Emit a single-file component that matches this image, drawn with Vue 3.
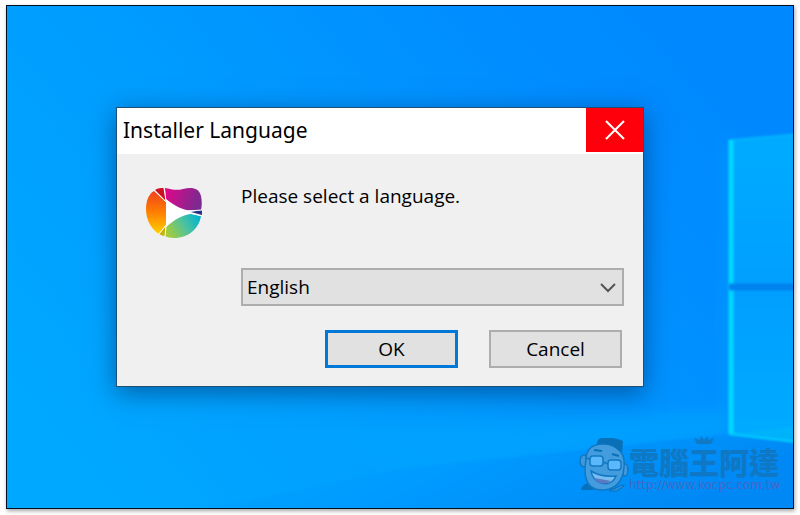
<script setup>
import { ref } from 'vue'

const visible = ref(true)
const language = ref('English')
const languages = ['English', 'Français', 'Deutsch', 'Español', '日本語']

function closeDialog() {
  visible.value = false
}
</script>

<template>
  <main class="page">
    <div class="desktop">
      <svg class="wallpaper" viewBox="0 0 786 502" preserveAspectRatio="xMaxYMid slice" aria-hidden="true">
        <defs>
          <linearGradient id="sky" x1="0" y1="0.75" x2="1" y2="0.2">
            <stop offset="0" stop-color="#00a8ff" />
            <stop offset="0.4" stop-color="#009cff" />
            <stop offset="0.8" stop-color="#008cff" />
            <stop offset="1" stop-color="#0088fe" />
          </linearGradient>
          <linearGradient id="floor" x1="0" y1="0" x2="1" y2="0.3">
            <stop offset="0" stop-color="#00a8ff" />
            <stop offset="0.5" stop-color="#009aff" />
            <stop offset="1" stop-color="#0088f5" />
          </linearGradient>
          <linearGradient id="pane" x1="0" y1="0" x2="0" y2="1">
            <stop offset="0" stop-color="#00acff" />
            <stop offset="0.5" stop-color="#009fff" />
            <stop offset="1" stop-color="#00abff" />
          </linearGradient>
          <filter id="soft" x="-10%" y="-10%" width="120%" height="120%">
            <feGaussianBlur stdDeviation="1" />
          </filter>
          <filter id="haze" x="-20%" y="-20%" width="140%" height="140%">
            <feGaussianBlur stdDeviation="8" />
          </filter>
        </defs>
        <rect width="786" height="502" fill="url(#sky)" />
        <path d="M300 430 L724 405 L724 430 L400 470 Z" fill="#00a4ff" opacity="0.7" filter="url(#haze)" />
        <path d="M200 502 L393 463 L724 428 L796 433 V512 H200 Z" fill="url(#floor)" filter="url(#soft)" />
        <path d="M712 135 H730 V425 H712 Z" fill="#009cff" opacity="0.4" filter="url(#haze)" />
        <g filter="url(#soft)">
          <path d="M722 134 L790 128 V436 L722 428 Z" fill="url(#pane)" />
          <path d="M722 134 L790 128" stroke="#00c0ff" stroke-width="1" />
          <path d="M724 134 V428" stroke="#00d8ff" stroke-width="5" />
          <path d="M735 427 L790 420 V436 Z" fill="#00b2fa" />
          <path d="M722 428 L790 436" stroke="#00d2ff" stroke-width="2" />
          <path d="M722 281 H790" stroke="#0082ef" stroke-width="7" />
        </g>
      </svg>

      <section v-if="visible" class="dialog" role="dialog" aria-labelledby="dialog-title">
        <header class="title-bar">
          <h1 id="dialog-title">Installer Language</h1>
          <button class="close" type="button" aria-label="Close" @click="closeDialog">
            <svg width="20" height="20" viewBox="0 0 20 20">
              <path d="M1 1 L19 19 M19 1 L1 19" stroke="#fff" stroke-width="2" fill="none" />
            </svg>
          </button>
        </header>

        <form class="dialog-body" @submit.prevent="closeDialog">
          <svg class="logo" width="58" height="54" viewBox="0 0 58 54" aria-hidden="true">
            <defs>
              <linearGradient id="warm" x1="0" y1="0" x2="0" y2="1">
                <stop offset="0" stop-color="#f0401e" />
                <stop offset="0.5" stop-color="#ff8000" />
                <stop offset="1" stop-color="#ffd000" />
              </linearGradient>
              <linearGradient id="purple" x1="0" y1="0" x2="1" y2="0.2">
                <stop offset="0" stop-color="#e3068a" />
                <stop offset="1" stop-color="#7b2a90" />
              </linearGradient>
              <linearGradient id="green" x1="0" y1="0.6" x2="1" y2="0.2">
                <stop offset="0" stop-color="#a4cc3c" />
                <stop offset="0.5" stop-color="#4fc29c" />
                <stop offset="1" stop-color="#00b4d2" />
              </linearGradient>
            </defs>
            <path d="M21 12 L21 41 L46 26 Z" fill="#fff" />
            <path d="M9 4 C4 7 1 13 1 22 C1 33 6 42 14 47 L21 38 V15 Z" fill="url(#warm)" />
            <path d="M10 3 C13 1 16 1 19 1 L21 14 Z" fill="#cf1020" />
            <path d="M20 1 C26 2 31 4 38 2 C47 0 54 1 56 9 C57 14 57 19 56 23 C49 24 44 24 38 22 C32 20 26 16 21 12 Z" fill="url(#purple)" />
            <path d="M46 25 L57 23 L57 28 Z" fill="#283184" />
            <path d="M56 29 C54 41 44 51 29 51 C25 51 22 50 20 49 L21 40 C29 33 37 28 46 27 Z" fill="url(#green)" />
            <path d="M14 47 L21 39 L20 49 C18 49 16 48 14 47 Z" fill="#c9b200" />
            <path d="M9 3 L21 15 M19 1 L21 14 M14 47 L21 38 M20 49 L21 39 M42 24 L57 23 M45 26 L57 29" stroke="#fff" stroke-width="1" fill="none" />
          </svg>

          <div class="fields">
            <label for="language">Please select a language.</label>
            <div class="select-box">
              <select id="language" v-model="language">
                <option v-for="item in languages" :key="item" :value="item">{{ item }}</option>
              </select>
              <svg class="chevron" width="18" height="12" viewBox="0 0 18 12" aria-hidden="true">
                <path d="M2 2 L9 9 L16 2" stroke="#555" stroke-width="2" fill="none" />
              </svg>
            </div>
            <div class="actions">
              <button class="action primary" type="submit">OK</button>
              <button class="action" type="button" @click="closeDialog">Cancel</button>
            </div>
          </div>
        </form>
      </section>

      <div class="watermark">
        <svg class="mascot" width="50" height="54" viewBox="0 0 50 54" aria-hidden="true">
          <!-- shoulders and hand -->
          <path d="M2 52 C3 48 5 46 9 45 L16 52 Z" fill="#0871bd" />
          <path d="M31 52 C37 51 40 47 45 47 L45 48 L38 53 H30 Z" fill="#2b8dd4" stroke="#0871bd" />
          <!-- ears and head -->
          <ellipse cx="5" cy="23" rx="4" ry="6" fill="#3d98dc" stroke="#1277c2" stroke-width="1.5" />
          <ellipse cx="46" cy="32" rx="3" ry="6" fill="#3d98dc" stroke="#1277c2" stroke-width="1.5" />
          <path d="M17 7 C10 9 7 14 7 21 C6 29 5 34 7 40 C9 48 15 52 23 52 C34 52 41 46 44 36 C46 27 46 18 41 13 C34 6 25 4 17 7 Z" fill="#429cdd" stroke="#1277c2" stroke-width="1.5" />
          <path d="M18 7 C18 3 19 1 22 0 C30 -1 38 0 44 3 L43 15 C37 8 28 5 18 7 Z" fill="#0a70b8" />
          <path d="M15 12 L23 13 M33 16 L40 18" stroke="#0a70b8" stroke-width="2" />
          <!-- glasses -->
          <rect x="11" y="18" width="13" height="10" rx="3" fill="#5cb8fa" stroke="#1277c2" stroke-width="1.5" />
          <rect x="29" y="22" width="13" height="10" rx="3" fill="#5cb8fa" stroke="#1277c2" stroke-width="1.5" />
          <path d="M24 24 L29 26 M6 20 L11 21" stroke="#1277c2" stroke-width="1.5" />
          <!-- smile -->
          <path d="M12 33 C20 38 28 39 37 38 C34 45 28 47 22 45 C16 43 13 39 12 33 Z" fill="#78bdf0" stroke="#1277c2" stroke-width="1.5" />
          <path d="M15 40 C21 41 27 42 32 43 C25 48 18 45 15 40 Z" fill="#5a78c4" />
        </svg>
        <div class="brand">
          <svg class="crown" width="20" height="10" viewBox="0 0 20 10" aria-hidden="true">
            <path d="M3 9 L0 3 L6 5 L7 1 L10 5 L14 1 L14 5 L20 3 L17 9 Z" fill="#1179c4" />
          </svg>
          <span class="brand-name">電腦王阿達</span>
          <a class="brand-url" href="http://www.kocpc.com.tw">http://www.kocpc.com.tw</a>
        </div>
      </div>
    </div>
  </main>
</template>

<style>
body {
  margin: 0;
  background: #fff;
}
</style>

<style scoped>
.page {
  box-sizing: border-box;
  min-height: 100vh;
  padding: 5px 6px 6px;
  display: grid;
  font-family: "Open Sans", "Noto Sans CJK TC", sans-serif;
  color: #000;
}

.desktop {
  position: relative;
  overflow: hidden;
  display: flex;
  align-items: flex-end;
  justify-content: flex-end;
  border: 1px solid #001020;
  background: #009cff;
  box-shadow: 1px 2px 4px rgba(0, 0, 0, 0.35);
}

.wallpaper {
  position: absolute;
  inset: 0;
  width: 100%;
  height: 100%;
}

.dialog {
  position: absolute;
  top: 101px;
  left: 109px;
  width: 526px;
  border: 1px solid #1c5075;
  background: #f0f0f0;
  box-shadow: 0 6px 24px rgba(0, 30, 80, 0.5);
}

.title-bar {
  display: flex;
  align-items: flex-start;
  justify-content: space-between;
  height: 46px;
  background: #fff;
}

h1 {
  margin: 0;
  padding-left: 6px;
  font-family: "Noto Sans", sans-serif;
  font-size: 21px;
  font-weight: 400;
  line-height: 44px;
}

.close {
  display: flex;
  align-items: center;
  justify-content: center;
  width: 57px;
  height: 44px;
  padding: 0;
  border: 0;
  background: #fe000c;
}

.dialog-body {
  display: flex;
  align-items: flex-start;
  gap: 38px;
  padding: 28px 19px 18px 28px;
  font-size: 19px;
  line-height: 28px;
}

.logo {
  flex: none;
  margin-top: 5px;
}

.fields {
  flex: 1;
  display: flex;
  flex-direction: column;
}

.select-box {
  position: relative;
  display: flex;
  margin-top: 58px;
}

select {
  appearance: none;
  width: 100%;
  height: 38px;
  padding: 0 4px;
  border: 2px solid #adadad;
  border-radius: 0;
  background: #e1e1e1;
  color: #000;
  font: inherit;
}

.chevron {
  position: absolute;
  top: 14px;
  right: 7px;
  pointer-events: none;
}

.actions {
  display: flex;
  justify-content: flex-end;
  gap: 31px;
  margin-top: 24px;
  padding-right: 2px;
}

.action {
  width: 133px;
  height: 38px;
  padding: 0;
  border: 2px solid #adadad;
  background: #e1e1e1;
  color: #000;
  font: inherit;
}

.primary {
  border: 3px solid #0078d7;
}

.watermark {
  position: relative;
  display: flex;
  align-items: flex-end;
  padding: 0 14px 16px 0;
}

.brand {
  position: relative;
  display: flex;
  flex-direction: column;
  width: 150px;
}

.crown {
  position: absolute;
  top: -9px;
  left: 65px;
}

.brand-name {
  color: #0f78c5;
  font-family: "Noto Sans CJK TC", sans-serif;
  font-size: 30px;
  font-weight: 900;
  line-height: 34px;
}

.brand-url {
  color: #4468c4;
  font-family: "DejaVu Sans", sans-serif;
  font-size: 12px;
  line-height: 14px;
  text-decoration: none;
  white-space: nowrap;
}
</style>
